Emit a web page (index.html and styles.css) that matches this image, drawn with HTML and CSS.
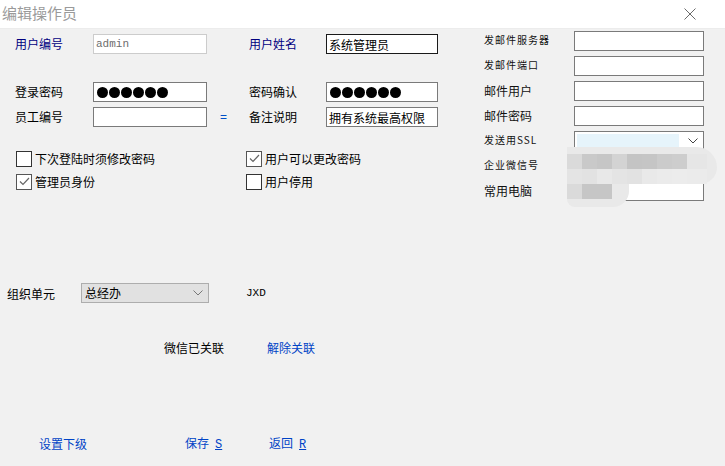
FILE: index.html
```html
<!DOCTYPE html>
<html lang="zh-CN">
<head>
<meta charset="utf-8">
<title>编辑操作员</title>
<link rel="stylesheet" href="styles.css">
</head>
<body>
<div class="window">
  <header class="titlebar">
    <span class="title">编辑操作员</span>
    <span class="close" aria-label="关闭">
      <svg width="12" height="12" viewBox="0 0 12 12"><path d="M0.5 0.5L11.5 11.5M11.5 0.5L0.5 11.5" stroke="#6a6a6a" stroke-width="1" fill="none"/></svg>
    </span>
  </header>

  <main class="body">
    <div class="top">
      <section class="left">
        <div class="fields">
          <div class="row">
            <span class="lbl key">用户编号</span>
            <input class="field disabled mono" value="admin" readonly>
            <span class="mid"></span>
            <span class="lbl key">用户姓名</span>
            <input class="field focus" value="系统管理员" readonly>
          </div>
          <div class="row spaced">
            <span class="lbl">登录密码</span>
            <div class="field"><span class="dots"><i></i><i></i><i></i><i></i><i></i><i></i></span></div>
            <span class="mid"></span>
            <span class="lbl">密码确认</span>
            <div class="field"><span class="dots"><i></i><i></i><i></i><i></i><i></i><i></i></span></div>
          </div>
          <div class="row">
            <span class="lbl">员工编号</span>
            <input class="field" value="" readonly>
            <span class="mid eq">=</span>
            <span class="lbl">备注说明</span>
            <input class="field" value="拥有系统最高权限" readonly>
          </div>
        </div>

        <div class="checks">
          <label class="chk"><span class="box"></span>下次登陆时须修改密码</label>
          <label class="chk"><span class="box on"><svg width="13" height="13" viewBox="0 0 13 13"><path d="M2 6.5L5 9.5L11 3" stroke="#666" stroke-width="1.2" fill="none"/></svg></span>用户可以更改密码</label>
          <label class="chk"><span class="box on"><svg width="13" height="13" viewBox="0 0 13 13"><path d="M2 6.5L5 9.5L11 3" stroke="#666" stroke-width="1.2" fill="none"/></svg></span>管理员身份</label>
          <label class="chk"><span class="box"></span>用户停用</label>
        </div>
      </section>

      <section class="side">
        <span class="slbl small">发邮件服务器</span><input class="field" readonly>
        <span class="slbl small">发邮件端口</span><input class="field" readonly>
        <span class="slbl">邮件用户</span><input class="field" readonly>
        <span class="slbl">邮件密码</span><input class="field" readonly>
        <span class="slbl small">发送用SSL</span>
        <div class="field combo"><span class="sel"></span><svg class="chev" width="10" height="6" viewBox="0 0 10 6"><path d="M0.5 0.5L5 5L9.5 0.5" stroke="#444" fill="none"/></svg></div>
        <span class="slbl small">企业微信号</span><input class="field" readonly>
        <span class="slbl">常用电脑</span><input class="field" readonly>
      </section>
    </div>

    <!-- mosaic that masks the WeChat account and PC name -->
    <div class="mask" aria-hidden="true">
      <div class="mask-top">
        <i style="background:#dadada"></i><i style="background:#c9c9c9"></i><i style="background:#c6c6c6"></i><i style="background:#d3d3d3"></i><i style="background:#c4c4c4"></i><i style="background:#c5c5c5"></i><i style="background:#cbcbcb"></i><i style="background:#cdcdcd"></i><i style="background:#e6e6e6"></i>
        <i style="background:#e4e4e4"></i><i style="background:#e2e2e2"></i><i style="background:#e8e8e8"></i><i style="background:#e4e4e4"></i><i style="background:#e2e2e2"></i><i style="background:#e9e9e9"></i><i style="background:#ebebeb"></i><i style="background:#ececec"></i><i style="background:#ebebeb"></i>
      </div>
      <div class="mask-bottom">
        <i style="background:#dadada"></i><i style="background:#c6c6c6"></i><i style="background:#c6c6c6"></i>
      </div>
    </div>

    <div class="org">
      <span class="org-lbl">组织单元</span>
      <div class="dropdown"><span>总经办</span><svg width="10" height="6" viewBox="0 0 10 6"><path d="M0.5 0.5L5 5L9.5 0.5" stroke="#777" fill="none"/></svg></div>
      <span class="code">JXD</span>
    </div>

    <div class="wechat">
      <span class="wx-state">微信已关联</span>
      <a class="link" href="#">解除关联</a>
    </div>

    <footer class="actions">
      <a class="link sub" href="#">设置下级</a>
      <a class="link save" href="#">保存<span class="key-u">S</span></a>
      <a class="link" href="#">返回<span class="key-u">R</span></a>
    </footer>
  </main>
</div>
</body>
</html>
```

FILE: styles.css
```css
* { box-sizing: border-box; }

html, body {
  margin: 0;
  padding: 0;
}

body {
  font-family: "Noto Sans CJK SC", "Noto Sans", sans-serif;
  font-size: 12px;
  color: #000;
  background: #f0f0f0;
}

.window {
  width: 725px;
  height: 466px;
  overflow: hidden;
  background: #f0f0f0;
}

/* title bar */
.titlebar {
  height: 29px;
  background: #fff;
  display: flex;
  align-items: center;
  justify-content: space-between;
  padding: 0 29px 0 2px;
  border-bottom: 1px solid #ececec;
}

.title {
  font-size: 15px;
  color: #9a9a9a;
  line-height: 20px;
  margin-top: -3px;
}

.close {
  display: flex;
  margin-top: -1px;
}

/* dialog body */
.body {
  position: relative;
  height: 437px;
  background: #f1f1f1;
}

.top {
  display: flex;
}

.left {
  width: 484px;
  padding-top: 5px;
}

.fields {
  padding-left: 15px;
}

.row {
  display: grid;
  grid-template-columns: 78px 114px 42px 77px 112px;
  height: 20px;
  align-items: center;
}

.row + .row { margin-top: 5px; }
.row.spaced { margin-top: 28px; }

.lbl {
  line-height: 20px;
  white-space: nowrap;
}

.lbl.key { color: #00007f; }

.field {
  height: 20px;
  width: 100%;
  margin: 0;
  border: 1px solid #7a7a7a;
  background: #fff;
  padding: 0 2px;
  font: 12px/18px "Noto Sans CJK SC", sans-serif;
  color: #000;
  outline: none;
  display: block;
}

.field.disabled {
  border-color: #cccccc;
  color: #6d6d6d;
}

.field.mono {
  font-family: "Liberation Mono", "DejaVu Sans Mono", monospace;
  font-size: 11px;
}

.field.focus { border-color: #1a1a1a; }

.mid.eq {
  color: #0050c8;
  padding-left: 13px;
  font-family: "Liberation Sans", sans-serif;
  font-size: 12px;
}

/* masked password */
.dots {
  display: flex;
  gap: 1px;
  height: 18px;
  align-items: center;
  padding-left: 1px;
}

.dots i {
  width: 11px;
  height: 11px;
  border-radius: 50%;
  background: #000;
}

/* check boxes */
.checks {
  margin-top: 20px;
  padding-left: 16px;
  display: grid;
  grid-template-columns: 230px auto;
  grid-auto-rows: 23px;
  align-items: center;
}

.chk {
  display: flex;
  align-items: center;
  white-space: nowrap;
}

.box {
  width: 16px;
  height: 16px;
  border: 1px solid #333;
  background: #fff;
  margin-right: 3px;
  display: flex;
  align-items: center;
  justify-content: center;
}

.box.on { border-color: #555; }

/* mail / contact column */
.side {
  display: grid;
  grid-template-columns: 90px 130px;
  grid-auto-rows: 20px;
  row-gap: 5px;
  padding-top: 2px;
  align-items: center;
}

.slbl {
  line-height: 20px;
  white-space: nowrap;
  color: #111;
}

.slbl.small {
  font-size: 10px;
  letter-spacing: 1px;
  margin-top: -3px;
}

.combo {
  display: flex;
  align-items: center;
  padding: 2px;
}

.combo .sel {
  width: 102px;
  height: 14px;
  background: #e6f4fb;
}

.combo .chev {
  margin-left: 9px;
}

.mask {
  position: absolute;
  left: 567px;
  top: 118px;
  filter: blur(0.7px);
}

.mask-top {
  width: 150px;
  padding: 7px 10px 0 0;
  background: #e9e9e9;
  border-radius: 0 22px 18px 0;
  display: grid;
  grid-template-columns: repeat(8, 15px) 20px;
  grid-auto-rows: 15px;
}

.mask-bottom {
  width: 62px;
  padding-bottom: 8px;
  background: #e9e9e9;
  border-radius: 0 0 16px 8px;
  display: grid;
  grid-template-columns: repeat(3, 15px);
  grid-auto-rows: 15px;
}

/* organisation */
.org {
  margin-top: 82px;
  padding-left: 7px;
  display: flex;
  align-items: center;
  height: 20px;
}

.org-lbl { width: 74px; }

.dropdown {
  width: 128px;
  height: 20px;
  background: #e1e1e1;
  border: 1px solid #adadad;
  display: flex;
  align-items: center;
  justify-content: space-between;
  padding: 0 5px 0 3px;
  line-height: 18px;
}

.code {
  margin-left: 37px;
  font-family: "Liberation Mono", "DejaVu Sans Mono", monospace;
  font-size: 11px;
}

/* wechat binding */
.wechat {
  margin-top: 34px;
  padding-left: 164px;
  display: flex;
  align-items: center;
  height: 20px;
}

.wx-state { width: 103px; }

.link {
  color: #0043c6;
  text-decoration: none;
  white-space: nowrap;
}

/* bottom actions */
.actions {
  margin-top: 76px;
  padding-left: 39px;
  display: flex;
  align-items: center;
  height: 20px;
}

.link.sub { width: 146px; }
.link.save { width: 84px; }

/* accelerator letter after the caption */
.key-u {
  margin-left: 6px;
  font-family: "Liberation Mono", monospace;
  font-size: 12px;
  text-decoration: underline;
}
```
